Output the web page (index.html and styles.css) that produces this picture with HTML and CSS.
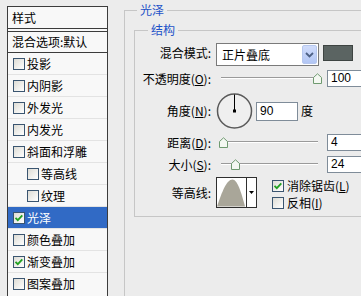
FILE: index.html
```html
<!DOCTYPE html>
<html>
<head>
<meta charset="utf-8">
<link rel="stylesheet" href="styles.css">
</head>
<body>
<div class="page">
  <div class="styles-list">
    <div class="list-head">样式</div>
    <div class="list-blend">混合选项:默认</div>
    <div class="item"><span class="cb"></span>投影</div>
    <div class="item"><span class="cb"></span>内阴影</div>
    <div class="item"><span class="cb"></span>外发光</div>
    <div class="item"><span class="cb"></span>内发光</div>
    <div class="item"><span class="cb"></span>斜面和浮雕</div>
    <div class="item sub"><span class="cb"></span>等高线</div>
    <div class="item sub"><span class="cb"></span>纹理</div>
    <div class="item selected"><span class="cb"><svg width="10" height="10" viewBox="0 0 10 10"><path d="M1.5 4.8 L3.8 7.2 L8.3 2.3" fill="none" stroke="#21a121" stroke-width="1.8"/></svg></span>光泽</div>
    <div class="item"><span class="cb"></span>颜色叠加</div>
    <div class="item"><span class="cb"><svg width="10" height="10" viewBox="0 0 10 10"><path d="M1.5 4.8 L3.8 7.2 L8.3 2.3" fill="none" stroke="#21a121" stroke-width="1.8"/></svg></span>渐变叠加</div>
    <div class="item last"><span class="cb"></span>图案叠加</div>
  </div>

  <fieldset class="outer">
    <legend>光泽</legend>
    <fieldset class="inner">
      <legend>结构</legend>

      <div class="row row-blend">
        <span class="lbl lbl-up">混合模式:</span>
        <div class="select"><span class="select-text">正片叠底</span><span class="dd"><svg width="9" height="6" viewBox="0 0 9 6"><path d="M1 1 L4.5 4.5 L8 1" fill="none" stroke="#4d6185" stroke-width="1.8"/></svg></span></div>
        <div class="swatch"></div>
      </div>

      <div class="row row-field">
        <span class="lbl">不透明度(<u>O</u>):</span>
        <div class="slider">
          <div class="track"></div>
          <svg class="knob" style="left:97px" width="9" height="11" viewBox="0 0 9 11"><path d="M0.5 10.5 V4.5 L4.5 0.8 L8.5 4.5 V10.5 Z" fill="#f4f8f2" stroke="#6f9a70"/></svg>
        </div>
        <div class="num num-wide">100</div>
      </div>

      <div class="row row-angle">
        <span class="lbl">角度(<u>N</u>):</span>
        <svg class="dial" width="37" height="36" viewBox="0 0 37 36"><circle cx="18.5" cy="18" r="17" fill="#efefef" stroke="#5a5a5a" stroke-width="1.5"/><path d="M18.5 1.5 V18" stroke="#000" stroke-width="1"/><rect x="17" y="16.5" width="3" height="3" fill="#000"/></svg>
        <div class="num num-angle">90</div>
        <span class="unit">度</span>
      </div>

      <div class="row row-field row-dist">
        <span class="lbl">距离(<u>D</u>):</span>
        <div class="slider">
          <div class="track"></div>
          <svg class="knob" style="left:3px" width="9" height="11" viewBox="0 0 9 11"><path d="M0.5 10.5 V4.5 L4.5 0.8 L8.5 4.5 V10.5 Z" fill="#f4f8f2" stroke="#6f9a70"/></svg>
        </div>
        <div class="num num-wide">4</div>
      </div>

      <div class="row row-field row-size">
        <span class="lbl">大小(<u>S</u>):</span>
        <div class="slider">
          <div class="track"></div>
          <svg class="knob" style="left:15px" width="9" height="11" viewBox="0 0 9 11"><path d="M0.5 10.5 V4.5 L4.5 0.8 L8.5 4.5 V10.5 Z" fill="#f4f8f2" stroke="#6f9a70"/></svg>
        </div>
        <div class="num num-wide">24</div>
      </div>

      <div class="row row-contour">
        <span class="lbl">等高线:</span>
        <div class="contour">
          <div class="contour-pic"><svg width="30" height="29" viewBox="0 0 30 29"><path d="M0 29 C5 14 10 1 16 1 C21 1 25 14 29 29 Z" fill="#a9a699"/></svg></div>
          <div class="contour-dd"><svg width="5" height="3" viewBox="0 0 5 3"><path d="M0 0 H5 L2.5 3 Z" fill="#000"/></svg></div>
        </div>
        <div class="checks">
          <div class="check-row"><span class="cb"><svg width="10" height="10" viewBox="0 0 10 10"><path d="M1.5 4.8 L3.8 7.2 L8.3 2.3" fill="none" stroke="#21a121" stroke-width="1.8"/></svg></span>消除锯齿(<u>L</u>)</div>
          <div class="check-row"><span class="cb"></span>反相(<u>I</u>)</div>
        </div>
      </div>
    </fieldset>
  </fieldset>
</div>
</body>
</html>
```

FILE: styles.css
```css
* { box-sizing: border-box; }
html, body { margin: 0; padding: 0; }
body {
  width: 361px;
  height: 296px;
  overflow: hidden;
  background: #ececec;
  font-family: "Noto Sans CJK SC", "Noto Sans", sans-serif;
  font-size: 12px;
  color: #000;
}
u { text-decoration: underline; text-underline-offset: 1px; }

.page {
  display: flex;
  align-items: flex-start;
  width: 361px;
  height: 296px;
  overflow: hidden;
}

/* left styles list */
.styles-list {
  flex: none;
  width: 101px;
  height: 290px;
  overflow: hidden;
  margin: 6px 0 0 7px;
  border: 1px solid #3c3c3c;
  border-bottom: none;
  background: #f8f8f8;
}
.list-head {
  height: 25px;
  border-bottom: 4px double #3c3c3c;
  padding-left: 4px;
  line-height: 21px;
}
.list-blend {
  height: 21px;
  border-bottom: 1px solid #3c3c3c;
  padding-left: 4px;
  line-height: 20px;
}
.item {
  height: 22px;
  display: flex;
  align-items: center;
  padding-left: 5px;
  border-bottom: 1px solid #e3e3e3;
  line-height: 16px;
}
.item.last { height: 21px; border-bottom: none; }
.item.sub { padding-left: 19px; }
.item.selected { background: #316ac5; color: #fff; }

.cb {
  flex: none;
  width: 12px;
  height: 12px;
  margin-right: 2px;
  border: 1px solid #3a5570;
  background: linear-gradient(135deg, #dddcd5, #ffffff);
  display: flex;
  align-items: center;
  justify-content: center;
}

/* right group boxes */
fieldset {
  margin: 0;
  border: 1px solid #c6c6c6;
  min-width: 0;
}
legend {
  font-size: 12px;
  line-height: 16px;
  color: #1d52c8;
  padding: 0 3px;
}
.outer {
  flex: none;
  width: 237px;
  height: 294px;
  margin: 2px 0 0 16px;
  padding: 0 0 0 9px;
  border-right: none;
  border-bottom: none;
}
.outer > legend { margin-left: 3px; }
.inner {
  width: 227px;
  margin-top: 4px;
  padding: 5px 0 8px 6px;
  border-right: none;
}
.inner > legend { margin-left: 7px; }

.row {
  display: flex;
  align-items: center;
}
.lbl {
  flex: none;
  width: 70px;
  margin-right: 5px;
  text-align: right;
  line-height: 16px;
  white-space: nowrap;
}
.lbl-up { margin-bottom: 4px; }

.row-blend { height: 23px; }
.row-field { height: 17px; margin-top: 4px; }
.row-angle { height: 36px; margin-top: 6px; }
.row-dist { margin-top: 5px; }
.row-size { margin-top: 5px; }
.row-contour { height: 31px; margin-top: 4px; align-items: flex-start; }
.row-contour .lbl { margin-top: 8px; }

.select {
  flex: none;
  width: 103px;
  height: 23px;
  border: 1px solid #7a7a7a;
  background: #fff;
  display: flex;
  align-items: center;
  padding: 1px;
}
.select-text { flex: 1; padding-left: 4px; line-height: 16px; }
.dd {
  flex: none;
  width: 15px;
  height: 19px;
  border: 1px solid #b6c7ee;
  border-radius: 2px;
  background: linear-gradient(#d0dcfb, #b2c6f4);
  display: flex;
  align-items: center;
  justify-content: center;
}
.swatch {
  flex: none;
  align-self: flex-start;
  margin: 2px 0 0 4px;
  width: 30px;
  height: 16px;
  border: 1px solid #3e4442;
  background: #5b6462;
}

.slider {
  flex: none;
  position: relative;
  width: 107px;
  height: 17px;
}
.track {
  position: absolute;
  left: 5px;
  right: 5px;
  top: 7px;
  height: 2px;
  border-top: 1px solid #9a9a9a;
  border-bottom: 1px solid #ffffff;
}
.knob { position: absolute; top: 3px; }

.num {
  flex: none;
  background: #fff;
  border: 1px solid #7f8c99;
  font-family: "Liberation Sans", "DejaVu Sans", sans-serif;
  font-size: 12px;
  padding-left: 3px;
}
.num-wide {
  width: 34px;
  height: 17px;
  line-height: 15px;
  margin-left: 4px;
  border-right: none;
}
.dial { flex: none; }
.num-angle {
  width: 42px;
  height: 19px;
  line-height: 17px;
  margin-left: 3px;
}
.unit { margin-left: 3px; line-height: 16px; }

.contour {
  flex: none;
  width: 41px;
  height: 31px;
  border: 1px solid #2f2f2f;
  display: flex;
  background: #fff;
}
.contour-pic {
  width: 30px;
  border-right: 1px solid #2f2f2f;
  display: flex;
  align-items: flex-end;
}
.contour-dd {
  flex: 1;
  display: flex;
  align-items: center;
  justify-content: center;
  background: #fff;
}
.checks {
  margin-left: 15px;
  display: flex;
  flex-direction: column;
}
.check-row {
  height: 17px;
  display: flex;
  align-items: center;
  line-height: 16px;
  white-space: nowrap;
}
.check-row .cb { margin-right: 3px; }
```
